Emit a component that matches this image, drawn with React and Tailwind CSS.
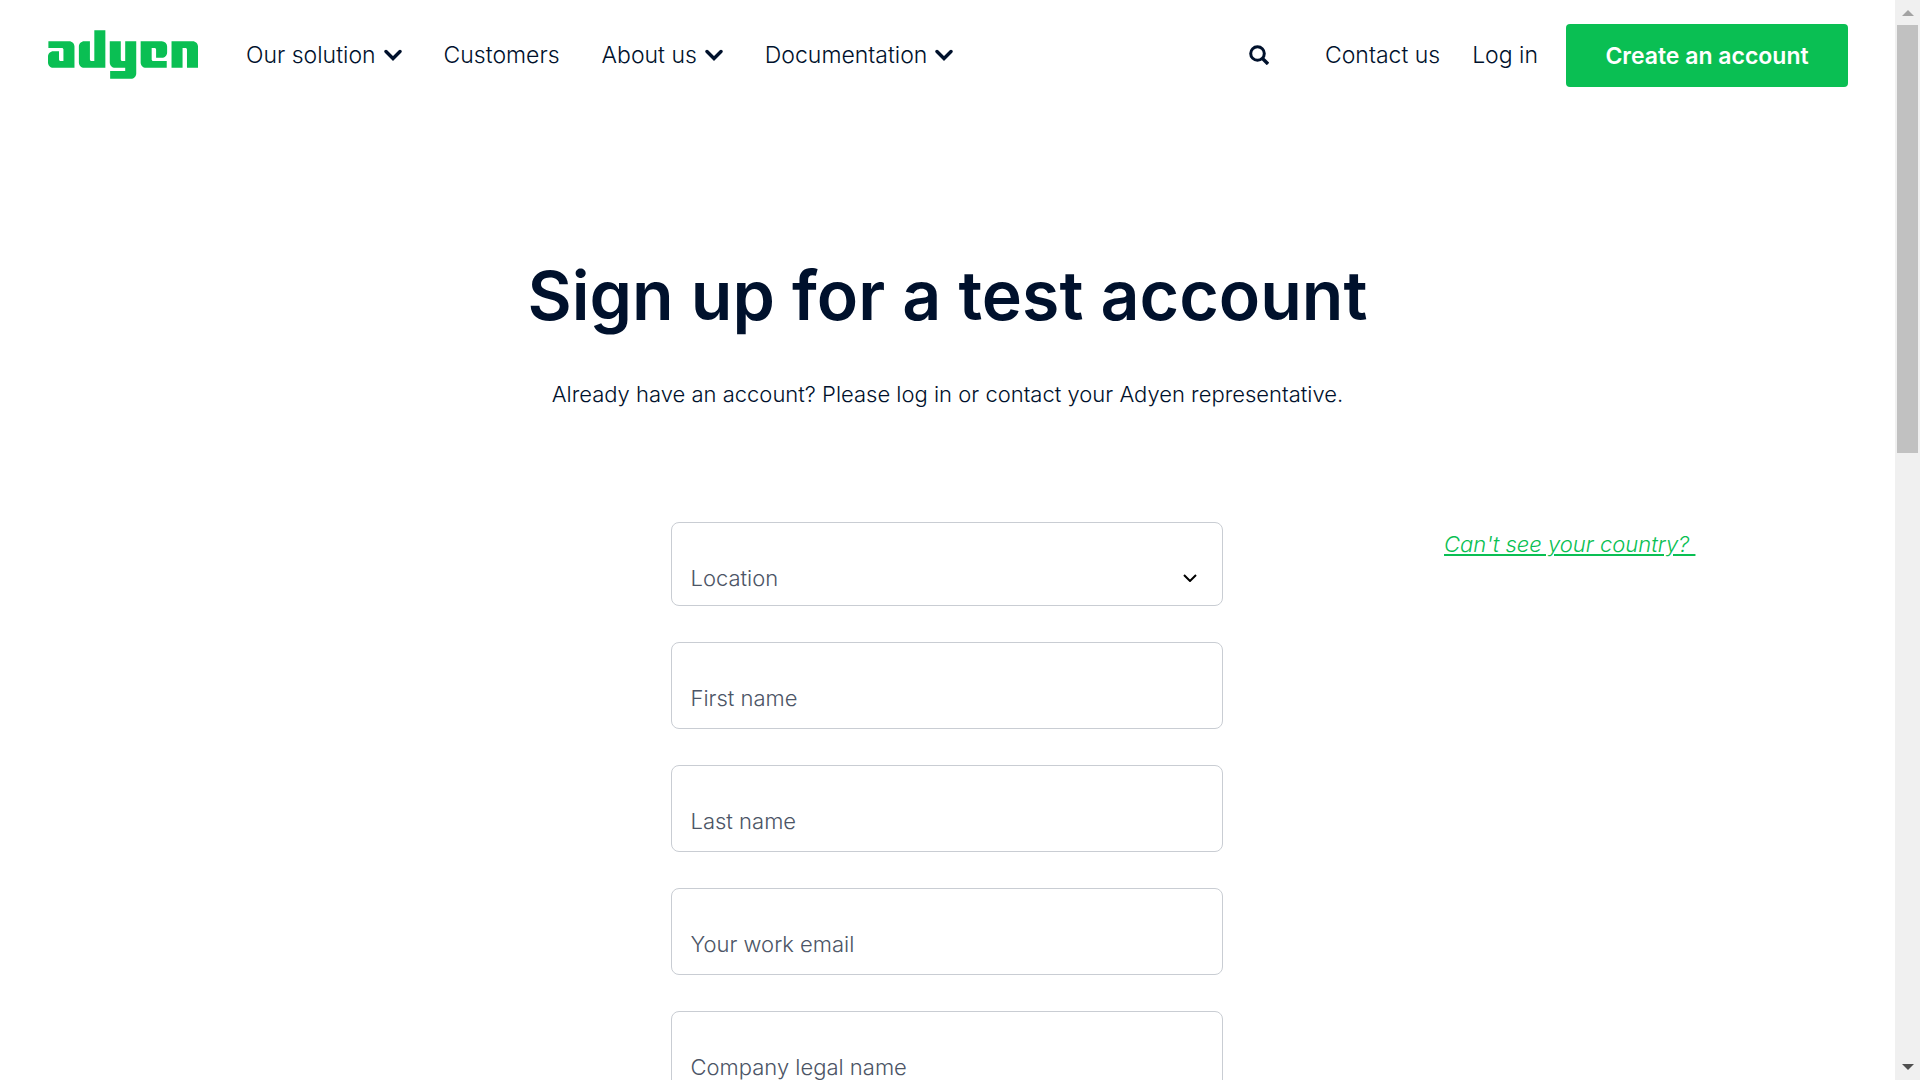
import { SiAdyen } from "react-icons/si";

function Chevron({ className }) {
  return (
    <svg className={className} viewBox="0 0 18 12" fill="none" stroke="currentColor" strokeWidth="3.4" strokeLinecap="round" aria-hidden="true">
      <path d="M2 2.500 9 9.500l7-7" />
    </svg>
  );
}

function NavItem({ label, menu }) {
  if (menu) {
    return (
      <button type="button" className="flex items-center gap-2">
        {label}
        <Chevron className="h-3 w-[18px]" />
      </button>
    );
  }
  return <a href="#">{label}</a>;
}

function Header() {
  return (
    <header className="flex items-center pt-6 pr-[47px] pl-12 text-[23px]">
      <a href="#" aria-label="Adyen" className="mr-12 pb-0.5 text-[#0abf53]">
        <SiAdyen viewBox="0 8.08 24 7.84" className="h-[49px] w-[150px]" />
      </a>
      <nav className="flex items-center gap-[42px] pb-0.5">
        <NavItem label="Our solution" menu />
        <NavItem label="Customers" />
        <NavItem label="About us" menu />
        <NavItem label="Documentation" menu />
      </nav>
      <div className="ml-auto flex items-center">
        <button type="button" aria-label="Search" className="mr-14 pb-0.5">
          <svg className="size-5" viewBox="0 0 20 20" fill="none" stroke="currentColor" strokeWidth="3" aria-hidden="true">
            <circle cx="8.500" cy="8.500" r="6.800" />
            <path d="m13 13 6 6" strokeWidth="3.400" />
          </svg>
        </button>
        <a href="#" className="mr-8 pb-0.5">Contact us</a>
        <a href="#" className="mr-7 pb-0.5">Log in</a>
        <a href="#" className="flex h-[63px] w-[282px] items-center justify-center rounded bg-[#0abf53] font-semibold text-white">
          Create an account
        </a>
      </div>
    </header>
  );
}

const labelClass =
  "pointer-events-none absolute top-10 left-5 text-[#4c5566] peer-focus:top-2 peer-focus:text-base peer-[:not(:placeholder-shown):not(select)]:top-2 peer-[:not(:placeholder-shown):not(select)]:text-base";

function TextField({ id, label, type = "text" }) {
  return (
    <div className="relative">
      <input
        id={id}
        type={type}
        placeholder=" "
        className="peer block h-[87px] w-full rounded-lg border border-[#c9cdd3] px-[19px] pt-6 font-light outline-none focus:border-[#00112c]"
      />
      <label htmlFor={id} className={labelClass}>{label}</label>
    </div>
  );
}

function SignupForm() {
  return (
    <form className="flex flex-col gap-9">
      <div className="relative">
        <select
          id="location"
          defaultValue=""
          className="peer block h-[84px] w-full appearance-none rounded-lg border border-[#c9cdd3] bg-white px-[19px] pt-7 font-light outline-none focus:border-[#00112c]"
        >
          <option value="" />
        </select>
        <label htmlFor="location" className={labelClass}>Location</label>
        <svg className="pointer-events-none absolute right-6 bottom-6 h-2 w-4 text-black" viewBox="0 0 16 8" fill="none" stroke="currentColor" strokeWidth="2" aria-hidden="true">
          <path d="m1 1 6 6 6-6" />
        </svg>
      </div>
      <TextField id="first-name" label="First name" />
      <TextField id="last-name" label="Last name" />
      <TextField id="email" label="Your work email" type="email" />
      <TextField id="company" label="Company legal name" />
    </form>
  );
}

function ScrollTrack() {
  return (
    <div className="flex w-[25px] shrink-0 flex-col items-center bg-[#f0f0f0]" aria-hidden="true">
      <svg className="mt-2.5 h-1.5 w-3 text-[#a3a3a3]" viewBox="0 0 12 6" fill="currentColor"><path d="M0 6 6 0l6 6z" /></svg>
      <div className="mt-[9px] h-[428px] w-[21px] bg-[#c1c1c1]" />
      <svg className="mt-auto mb-2.5 h-1.5 w-3 text-[#505050]" viewBox="0 0 12 6" fill="currentColor"><path d="M0 0h12L6 6z" /></svg>
    </div>
  );
}

export default function App() {
  return (
    <div className="flex h-screen overflow-hidden bg-white font-['Inter',sans-serif] text-[22px] leading-8 font-light text-[#00112c]">
      <div className="min-w-0 flex-1 overflow-hidden">
        <Header />
        <main>
          <h1 className="mt-[168px] text-center text-[68px] leading-20 font-semibold">Sign up for a test account</h1>
          <p className="mt-[43px] text-center">Already have an account? Please log in or contact your Adyen representative.</p>
          <div className="mt-28 mr-0.5 grid grid-cols-[1fr_552px_1fr]">
            <div />
            <SignupForm />
            <div className="pt-1.5 pl-6 text-center">
              <a href="#" className="whitespace-pre text-[#0abf53] italic underline decoration-2 underline-offset-2">{"Can't see your country? "}</a>
            </div>
          </div>
        </main>
      </div>
      <ScrollTrack />
    </div>
  );
}
